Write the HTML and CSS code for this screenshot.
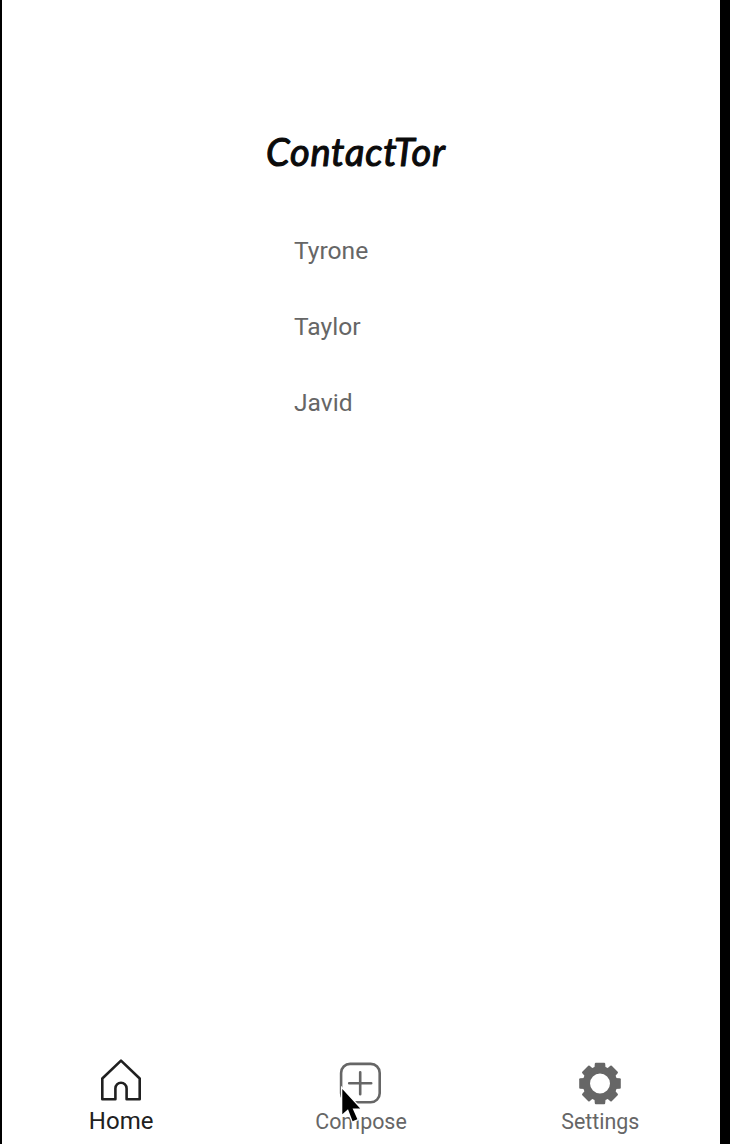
FILE: index.html
```html
<!DOCTYPE html>
<html lang="en">
<head>
<meta charset="utf-8">
<title>ContactTor</title>
<link rel="stylesheet" href="styles.css">
</head>
<body>
<div class="screen">
  <main class="content">
    <h1 class="brand"><svg class="brand-art" viewBox="0 0 200 56"><text class="brand-text" x="10" y="41" textLength="179" lengthAdjust="spacing">ContactTor</text></svg></h1>
    <ul class="contacts">
      <li>Tyrone</li>
      <li>Taylor</li>
      <li>Javid</li>
    </ul>
  </main>
  <nav class="tabs">
    <a class="tab tab-active">
      <svg class="icon" viewBox="0 0 48 48"><path class="line" d="M4.3 43.2V22.5L23 4.6l18.7 17.9v20.7H28.6V32.4a5.6 5.6 0 0 0-11.2 0v10.8Z"/></svg>
      <span class="label">Home</span>
    </a>
    <a class="tab">
      <svg class="icon" viewBox="0 0 48 48"><rect class="line" x="4.1" y="7.9" width="38.6" height="38.4" rx="9"/><path class="line" d="M23.2 16.2v22M12.2 27.2h22"/></svg>
      <span class="label">Compose</span>
    </a>
    <a class="tab">
      <svg class="icon" viewBox="0 0 48 48">
        <g transform="translate(24 27.5)">
          <path class="fill" fill-rule="evenodd" d="M-17.4 0a17.4 17.4 0 1 0 34.8 0a17.4 17.4 0 1 0-34.8 0M-10 0a10 10 0 1 0 20 0a10 10 0 1 0-20 0"/>
          <g class="fill">
            <path id="tooth" d="M-5.6-15L-5.2-19.8Q-5.1-20.8-4.2-20.8H4.2Q5.1-20.8 5.2-19.8L5.6-15Z"/>
            <use href="#tooth" transform="rotate(45)"/>
            <use href="#tooth" transform="rotate(90)"/>
            <use href="#tooth" transform="rotate(135)"/>
            <use href="#tooth" transform="rotate(180)"/>
            <use href="#tooth" transform="rotate(225)"/>
            <use href="#tooth" transform="rotate(270)"/>
            <use href="#tooth" transform="rotate(315)"/>
          </g>
        </g>
      </svg>
      <span class="label">Settings</span>
    </a>
  </nav>
</div>
<svg class="cursor" viewBox="0 0 24 38"><path d="M2.3 3V28.2L8 23.2L12.6 35.2L17.4 33.2L12.6 22.4H20.2Z"/></svg>
</body>
</html>
```
FILE: styles.css
```css
* { box-sizing: border-box; }
body { margin: 0; background: #000; font-family: Roboto, sans-serif; color: #666; }
.screen {
  display: flex;
  flex-direction: column;
  justify-content: space-between;
  height: 1144px;
  margin: 0 10px 0 2px;
  background: #fff;
  overflow: hidden;
}
.content { padding-top: 125px; }
.brand { margin: 0 0 0 254px; height: 56px; }
.brand-art { display: block; width: 200px; height: 56px; }
.brand-text { font: italic 400 38px Lato, sans-serif; fill: #0b0b0b; stroke: #0b0b0b; stroke-width: 1.1; stroke-linejoin: round; }
.contacts {
  margin: 0 0 0 292px;
  padding: 32px 0 0;
  list-style: none;
  font-size: 24.6px;
  line-height: 76px;
}
.tabs {
  display: grid;
  grid-template-columns: repeat(3, 1fr);
  height: 88px;
}
.tab { display: flex; flex-direction: column; align-items: center; }
.icon { width: 48px; height: 48px; overflow: visible; }
.line { fill: none; stroke: currentColor; stroke-width: 2.6; stroke-linejoin: round; stroke-linecap: round; }
.fill { fill: currentColor; }
.label { margin-top: 5px; font-size: 21.4px; line-height: 26px; letter-spacing: 0; }
.tab-active { color: #202020; }
.tab-active .label { margin: 2px 1px 0 0; font-size: 24px; line-height: 30px; }
.cursor { position: absolute; left: 340px; top: 1086px; width: 24px; height: 38px; overflow: visible; }
.cursor path { fill: #000; stroke: #fff; stroke-width: 2.6; paint-order: stroke; }
```
